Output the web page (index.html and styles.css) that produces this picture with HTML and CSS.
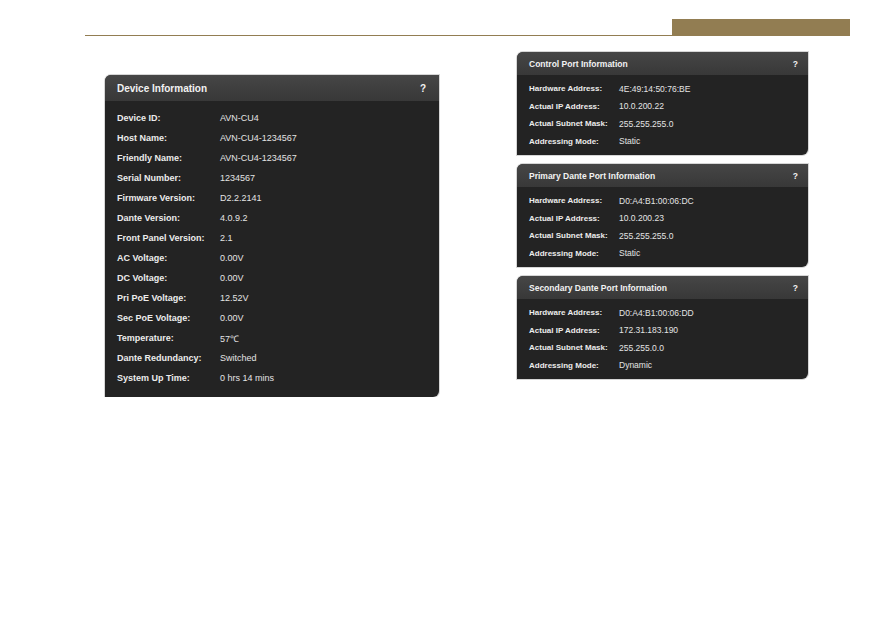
FILE: index.html
```html
<!DOCTYPE html>
<html>
<head>
<meta charset="utf-8">
<link rel="stylesheet" href="styles.css">
</head>
<body>
<header class="topbar">
  <div class="rule"></div>
  <div class="tab"></div>
</header>
<main class="content">
  <section class="card card-device">
    <div class="card-head"><span>Device Information</span><span class="help">?</span></div>
    <div class="card-body">
      <div class="row"><span class="lbl">Device ID:</span><span class="val">AVN-CU4</span></div>
      <div class="row"><span class="lbl">Host Name:</span><span class="val">AVN-CU4-1234567</span></div>
      <div class="row"><span class="lbl">Friendly Name:</span><span class="val">AVN-CU4-1234567</span></div>
      <div class="row"><span class="lbl">Serial Number:</span><span class="val">1234567</span></div>
      <div class="row"><span class="lbl">Firmware Version:</span><span class="val">D2.2.2141</span></div>
      <div class="row"><span class="lbl">Dante Version:</span><span class="val">4.0.9.2</span></div>
      <div class="row"><span class="lbl">Front Panel Version:</span><span class="val">2.1</span></div>
      <div class="row"><span class="lbl">AC Voltage:</span><span class="val">0.00V</span></div>
      <div class="row"><span class="lbl">DC Voltage:</span><span class="val">0.00V</span></div>
      <div class="row"><span class="lbl">Pri PoE Voltage:</span><span class="val">12.52V</span></div>
      <div class="row"><span class="lbl">Sec PoE Voltage:</span><span class="val">0.00V</span></div>
      <div class="row"><span class="lbl">Temperature:</span><span class="val">57℃</span></div>
      <div class="row"><span class="lbl">Dante Redundancy:</span><span class="val">Switched</span></div>
      <div class="row"><span class="lbl">System Up Time:</span><span class="val">0 hrs 14 mins</span></div>
    </div>
  </section>
  <div class="side">
    <section class="card card-port">
      <div class="card-head"><span>Control Port Information</span><span class="help">?</span></div>
      <div class="card-body">
        <div class="row"><span class="lbl">Hardware Address:</span><span class="val">4E:49:14:50:76:BE</span></div>
        <div class="row"><span class="lbl">Actual IP Address:</span><span class="val">10.0.200.22</span></div>
        <div class="row"><span class="lbl">Actual Subnet Mask:</span><span class="val">255.255.255.0</span></div>
        <div class="row"><span class="lbl">Addressing Mode:</span><span class="val">Static</span></div>
      </div>
    </section>
    <section class="card card-port">
      <div class="card-head"><span>Primary Dante Port Information</span><span class="help">?</span></div>
      <div class="card-body">
        <div class="row"><span class="lbl">Hardware Address:</span><span class="val">D0:A4:B1:00:06:DC</span></div>
        <div class="row"><span class="lbl">Actual IP Address:</span><span class="val">10.0.200.23</span></div>
        <div class="row"><span class="lbl">Actual Subnet Mask:</span><span class="val">255.255.255.0</span></div>
        <div class="row"><span class="lbl">Addressing Mode:</span><span class="val">Static</span></div>
      </div>
    </section>
    <section class="card card-port">
      <div class="card-head"><span>Secondary Dante Port Information</span><span class="help">?</span></div>
      <div class="card-body">
        <div class="row"><span class="lbl">Hardware Address:</span><span class="val">D0:A4:B1:00:06:DD</span></div>
        <div class="row"><span class="lbl">Actual IP Address:</span><span class="val">172.31.183.190</span></div>
        <div class="row"><span class="lbl">Actual Subnet Mask:</span><span class="val">255.255.0.0</span></div>
        <div class="row"><span class="lbl">Addressing Mode:</span><span class="val">Dynamic</span></div>
      </div>
    </section>
  </div>
</main>
</body>
</html>
```
FILE: styles.css
```css
html, body {
  margin: 0;
  padding: 0;
  background: #ffffff;
  font-family: "Liberation Sans", Arial, sans-serif;
}

.topbar {
  display: flex;
  align-items: stretch;
  margin: 19px 43px 0 85px;
  height: 17px;
}

.rule {
  flex: 1;
  border-bottom: 1px solid #927d52;
}

.tab {
  width: 178px;
  background: #927d52;
}

.content {
  display: flex;
  align-items: flex-start;
  gap: 78px;
  padding-left: 105px;
}

.side {
  display: flex;
  flex-direction: column;
  gap: 9px;
  margin-top: 16px;
  width: 291px;
}

.card {
  background: #232323;
  border-radius: 6px 0 6px 0;
  box-shadow: 0 0 0 1px #d6d6d6;
  overflow: hidden;
  color: #ececec;
}

.card-head {
  display: flex;
  justify-content: space-between;
  align-items: center;
  background: linear-gradient(#464646, #383838);
  font-weight: bold;
  color: #f2f2f2;
}

.card-body {
  display: flex;
  flex-direction: column;
}

.row {
  display: flex;
  align-items: center;
}

.lbl {
  font-weight: bold;
  color: #ececec;
}

.val {
  color: #e4e4e4;
}

/* Device card */
.card-device {
  width: 334px;
  margin-top: 39px;
}

.card-device .card-head {
  height: 26px;
  padding: 0 12px;
  font-size: 10px;
}

.card-device .help {
  margin-right: 1px;
}

.card-device .card-body {
  padding: 7px 12px 9px;
}

.card-device .row {
  height: 20px;
  font-size: 9px;
}

.card-device .lbl {
  width: 103px;
}

/* Port cards */
.card-port .card-head {
  height: 23px;
  padding: 0 10px 0 12px;
  font-size: 8.5px;
}

.card-port .card-body {
  padding: 5px 12px 5px;
}

.card-port .row {
  height: 17.5px;
}

.card-port .lbl {
  width: 90px;
  font-size: 8px;
}

.card-port .val {
  font-size: 8.5px;
}
```
